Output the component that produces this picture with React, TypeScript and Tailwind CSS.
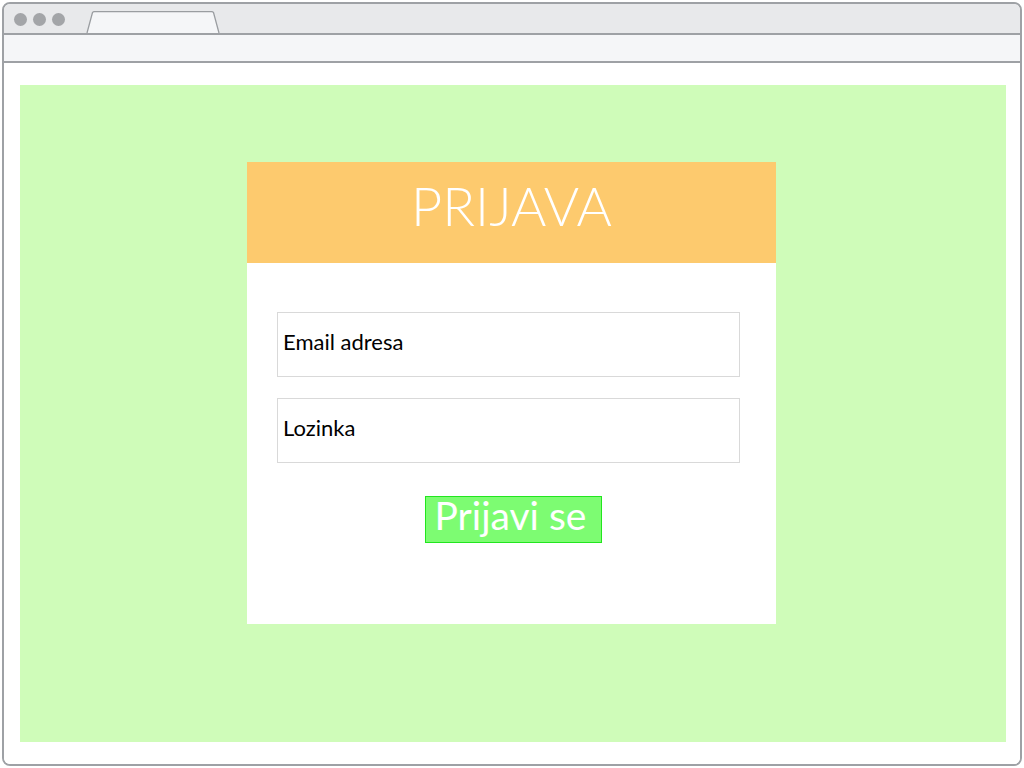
const Dot = () => <span className="block h-[13px] w-[13px] rounded-full bg-[#a3a5a8]" />;

const BrowserTab = () => (
  <svg width="136" height="22" viewBox="0 0 136 22" className="block">
    <path d="M1 22 L6.5 1.5 Q7 0.6 8.5 0.6 L125.5 0.6 Q127 0.6 127.5 1.5 L133 22" fill="#f5f6f8" stroke="#9a9da1" strokeWidth="1.3" />
  </svg>
);

const Field = ({ label }: { label: string }) => (
  <div className="flex h-[65px] w-[463px] items-center border border-[#d9d9d9] bg-white pb-[6px] pl-[5px] text-[22px] text-black">
    {label}
  </div>
);

export default function App() {
  return (
    <div className="h-[768px] w-[1024px] bg-white p-[2px] font-['Lato',sans-serif]">
      <div className="flex h-full flex-col overflow-hidden rounded-[8px] border-2 border-[#9ea1a5]">
        <div className="flex h-[31px] items-end border-b-2 border-[#9ea1a5] bg-[#e8e9eb]">
          <div className="mb-[7px] flex gap-[6px] pl-[10px]">
            <Dot />
            <Dot />
            <Dot />
          </div>
          <div className="ml-[21px]">
            <BrowserTab />
          </div>
        </div>
        <div className="h-[28px] border-b-2 border-[#9ea1a5] bg-[#f5f6f8]" />
        <div className="flex-1 bg-white pb-[22px] pl-4 pr-[14px] pt-[22px]">
          <div className="h-full bg-[#cffcb9] pl-[227px] pt-[77px]">
            <div className="h-[462px] w-[529px] bg-white">
              <div className="flex h-[101px] items-center justify-center bg-[#fdca6e] pb-[15px] text-[54px] font-light text-white">
                PRIJAVA
              </div>
              <div className="flex flex-col gap-[21px] pl-[30px] pt-[49px]">
                <Field label="Email adresa" />
                <Field label="Lozinka" />
              </div>
              <div className="ml-[178px] mt-[33px] flex h-[47px] w-[177px] items-center justify-center border border-[#22e61f] bg-[#7dfc72] pb-[9px] pr-[6px] text-[39px] text-white">
                Prijavi se
              </div>
            </div>
          </div>
        </div>
      </div>
    </div>
  );
}
